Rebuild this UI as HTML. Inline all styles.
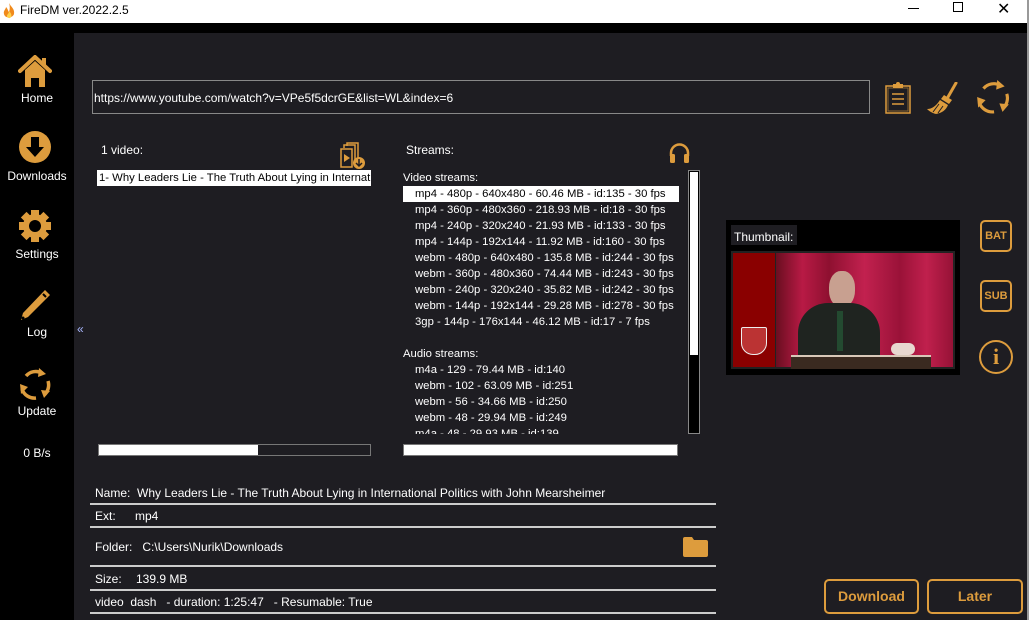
<!DOCTYPE html>
<html><head><meta charset="utf-8"><style>
*{margin:0;padding:0;box-sizing:border-box}
body{width:1029px;height:620px;overflow:hidden;background:#000;font-family:"Liberation Sans",sans-serif;font-size:12px;color:#fff;position:relative}
.a{position:absolute;white-space:nowrap}
.t{font-size:12px;line-height:16px}
.s .t{font-size:11.3px}
.side{color:#fff;font-size:12px;text-align:center;width:74px;left:0}
.ln{position:absolute;left:90px;width:626px;height:2px;background:#ccc}
.btn{position:absolute;border:2px solid #dd9c3d;border-radius:5px;color:#dd9c3d;font-weight:bold;text-align:center}
</style></head><body>
<div class="a" style="left:0;top:0;width:1029px;height:23px;background:#fff"></div>
<svg class="a" style="left:2px;top:2px" width="14" height="18" viewBox="0 0 14 18"><path d="M7 1C9 5 13 7 12 12C11 16 3 17 2 12C1 9 4 7 4 5C6 7 6 9 7 10C8 7 8 4 7 1Z" fill="#f08a1c"/><path d="M7 9C9 11 10 13 9 15C8 17 5 16 5 14C5 12 7 12 7 9Z" fill="#ffd24a"/></svg>
<div class="a" style="left:20px;top:3px;color:#000;font-size:12px">FireDM ver.2022.2.5</div>
<div class="a" style="left:908px;top:8px;width:11px;height:1px;background:#000"></div>
<div class="a" style="left:953px;top:2px;width:10px;height:10px;border:1px solid #000"></div>
<div class="a" style="left:997px;top:-1px;color:#000;font-size:16px">✕</div>
<div class="a" style="left:1027px;top:0;width:2px;height:620px;background:#999"></div>
<div class="a" style="left:74px;top:33px;width:953px;height:587px;background:#1e1d22"></div>

<!-- sidebar -->
<svg class="a" style="left:18px;top:55px" width="34" height="33" viewBox="0 0 34 33"><path d="M2 16L17 2L32 16" fill="none" stroke="#dd9c3d" stroke-width="4" stroke-linecap="round"/><path d="M7 15L17 6L27 15V32H21V23H13V32H7Z" fill="#dd9c3d"/><rect x="24" y="3" width="4" height="8" fill="#dd9c3d"/></svg>
<div class="a side" style="top:91px">Home</div>
<svg class="a" style="left:18px;top:130px" width="34" height="34" viewBox="0 0 34 34"><circle cx="17" cy="17" r="16" fill="#dd9c3d"/><path d="M13 7H21V17H26L17 27L8 17H13Z" fill="#000"/></svg>
<div class="a side" style="top:169px">Downloads</div>
<svg class="a" style="left:18px;top:209px" width="34" height="34" viewBox="0 0 34 34"><g fill="#dd9c3d"><circle cx="17" cy="17" r="12"/><g id="tt"><rect x="13" y="1" width="8" height="8"/><rect x="13" y="25" width="8" height="8"/></g><use href="#tt" transform="rotate(45 17 17)"/><use href="#tt" transform="rotate(90 17 17)"/><use href="#tt" transform="rotate(135 17 17)"/></g><circle cx="17" cy="17" r="6" fill="#000"/></svg>
<div class="a side" style="top:247px">Settings</div>
<svg class="a" style="left:18px;top:288px" width="34" height="34" viewBox="0 0 34 34"><path d="M27 2L32 7L10 29L3 32L5 25Z" fill="#dd9c3d"/><path d="M25 6L28 9" stroke="#000" stroke-width="2"/><circle cx="5" cy="30" r="1.5" fill="#000"/></svg>
<div class="a side" style="top:325px">Log</div>
<svg class="a" style="left:18px;top:367px" width="34" height="34" viewBox="0 0 34 34"><g fill="none" stroke="#dd9c3d" stroke-width="3.5"><path d="M8 9A13 13 0 0 1 24 6"/><path d="M30 14A13 13 0 0 1 26 28"/><path d="M18 31A13 13 0 0 1 4 22"/></g><g fill="#dd9c3d"><path d="M21 1L28 7L20 10Z"/><path d="M32 24L26 31L23 23Z"/><path d="M2 17L10 20L3 27Z"/></g></svg>
<div class="a side" style="top:404px">Update</div>
<div class="a side" style="top:446px">0 B/s</div>
<div class="a" style="left:77px;top:322px;color:#aab8ff;font-size:12px">«</div>

<!-- url -->
<div class="a" style="left:92px;top:80px;width:778px;height:34px;border:1px solid #888"></div>
<div class="a t" style="left:94px;top:90px">https://www.youtube.com/watch?v=VPe5f5dcrGE&amp;list=WL&amp;index=6</div>
<svg class="a" style="left:884px;top:82px" width="28" height="33" viewBox="0 0 28 33"><rect x="2" y="4" width="24" height="27" fill="none" stroke="#dd9c3d" stroke-width="1.5"/><rect x="4" y="6" width="20" height="23" fill="none" stroke="#8a6530" stroke-width="1"/><path d="M9 4V2H12A2 2 0 0 1 16 2H19V6H9Z" fill="#dd9c3d"/><path d="M8 12H20M8 17H20M8 22H20" stroke="#dd9c3d" stroke-width="1.5"/></svg>
<svg class="a" style="left:926px;top:82px" width="34" height="32" viewBox="0 0 34 32"><path d="M30 1L22 15" stroke="#dd9c3d" stroke-width="3" stroke-linecap="round"/><path d="M18 13L26 18L23 22L15 17Z" fill="#dd9c3d"/><path d="M14 18L22 23C20 28 16 31 10 32C6 31 3 29 1 27C6 27 10 24 14 18Z" fill="#dd9c3d"/><path d="M7 30L13 22M12 31L17 24" stroke="#1e1d22" stroke-width="1"/></svg>
<svg class="a" style="left:975px;top:79px" width="36" height="36" viewBox="0 0 34 34"><g fill="none" stroke="#dd9c3d" stroke-width="3"><path d="M8 9A13 13 0 0 1 24 6"/><path d="M30 14A13 13 0 0 1 26 28"/><path d="M18 31A13 13 0 0 1 4 22"/></g><g fill="#dd9c3d"><path d="M21 1L28 7L20 10Z"/><path d="M32 24L26 31L23 23Z"/><path d="M2 17L10 20L3 27Z"/></g></svg>

<!-- left list -->
<div class="a t" style="left:101px;top:142px">1 video:</div>
<svg class="a" style="left:338px;top:142px" width="28" height="28" viewBox="0 0 28 28"><g fill="none" stroke="#dd9c3d" stroke-width="1.5"><path d="M9 4V1H20V20"/><path d="M6 6V3H17V23"/><rect x="3" y="7" width="11" height="18"/></g><path d="M6 12L12 16L6 20Z" fill="#dd9c3d"/><circle cx="21" cy="21" r="6" fill="#dd9c3d"/><path d="M21 17V23M18 21L21 24L24 21" stroke="#1e1d22" stroke-width="1.5" fill="none"/></svg>
<div class="a s" style="left:97px;top:170px;width:274px;height:16px;background:#fff;overflow:hidden"><div class="t" style="color:#000;padding-left:2px">1- Why Leaders Lie - The Truth About Lying in International Politics</div></div>
<div class="a" style="left:98px;top:444px;width:273px;height:12px;border:1px solid #777;background:#1e1d22"><div style="width:159px;height:10px;background:#fff"></div></div>

<!-- streams -->
<div class="a t" style="left:406px;top:142px">Streams:</div>
<svg class="a" style="left:668px;top:142px" width="23" height="22" viewBox="0 0 23 22"><path d="M3 14V11A8.5 8.5 0 0 1 20 11V14" fill="none" stroke="#dd9c3d" stroke-width="2.5"/><rect x="2" y="12" width="5" height="9" rx="1.5" fill="#dd9c3d"/><rect x="16" y="12" width="5" height="9" rx="1.5" fill="#dd9c3d"/></svg>
<div class="a s" style="left:403px;top:170px;width:276px;height:264px;overflow:hidden">
<div class="t">Video streams:</div>
<div class="t" style="background:#fff;color:#000;padding-left:12px">mp4 - 480p - 640x480 - 60.46 MB - id:135 - 30 fps</div>
<div class="t" style="padding-left:12px">mp4 - 360p - 480x360 - 218.93 MB - id:18 - 30 fps</div>
<div class="t" style="padding-left:12px">mp4 - 240p - 320x240 - 21.93 MB - id:133 - 30 fps</div>
<div class="t" style="padding-left:12px">mp4 - 144p - 192x144 - 11.92 MB - id:160 - 30 fps</div>
<div class="t" style="padding-left:12px">webm - 480p - 640x480 - 135.8 MB - id:244 - 30 fps</div>
<div class="t" style="padding-left:12px">webm - 360p - 480x360 - 74.44 MB - id:243 - 30 fps</div>
<div class="t" style="padding-left:12px">webm - 240p - 320x240 - 35.82 MB - id:242 - 30 fps</div>
<div class="t" style="padding-left:12px">webm - 144p - 192x144 - 29.28 MB - id:278 - 30 fps</div>
<div class="t" style="padding-left:12px">3gp - 144p - 176x144 - 46.12 MB - id:17 - 7 fps</div>
<div class="t">&nbsp;</div>
<div class="t">Audio streams:</div>
<div class="t" style="padding-left:12px">m4a - 129 - 79.44 MB - id:140</div>
<div class="t" style="padding-left:12px">webm - 102 - 63.09 MB - id:251</div>
<div class="t" style="padding-left:12px">webm - 56 - 34.66 MB - id:250</div>
<div class="t" style="padding-left:12px">webm - 48 - 29.94 MB - id:249</div>
<div class="t" style="padding-left:12px">m4a - 48 - 29.93 MB - id:139</div>
</div>
<div class="a" style="left:688px;top:170px;width:12px;height:264px;border:1px solid #888;background:#000"><div style="margin:1px;width:8px;height:183px;background:#fff"></div></div>
<div class="a" style="left:403px;top:444px;width:275px;height:12px;border:1px solid #777;background:#fff"></div>

<!-- info -->
<div class="a t" style="left:95px;top:485px">Name:&nbsp; Why Leaders Lie - The Truth About Lying in International Politics with John Mearsheimer</div>
<div class="ln" style="top:503px"></div>
<div class="a t" style="left:95px;top:508px">Ext:</div><div class="a t" style="left:135px;top:508px">mp4</div>
<div class="ln" style="top:526px"></div>
<div class="a t" style="left:95px;top:539px">Folder:&nbsp;&nbsp; C:\Users\Nurik\Downloads</div>
<svg class="a" style="left:683px;top:537px" width="25" height="20" viewBox="0 0 25 20"><path d="M0 2Q0 0 2 0H9L11 3H23Q25 3 25 5V18Q25 20 23 20H2Q0 20 0 18Z" fill="#dd9c3d"/></svg>
<div class="ln" style="top:565px"></div>
<div class="a t" style="left:95px;top:571px">Size:</div><div class="a t" style="left:136px;top:571px">139.9 MB</div>
<div class="ln" style="top:589px"></div>
<div class="a t" style="left:95px;top:594px">video&nbsp; dash&nbsp;&nbsp; - duration: 1:25:47&nbsp;&nbsp; - Resumable: True</div>
<div class="ln" style="top:612px"></div>

<!-- thumbnail -->
<div class="a" style="left:726px;top:220px;width:234px;height:155px;background:#000"></div>
<div class="a t" style="left:731px;top:225px;width:66px;height:20px;background:#1e1d22;padding:4px 0 0 3px">Thumbnail:</div>
<div class="a" style="left:731px;top:251px;width:224px;height:118px;background:#222;overflow:hidden">
<div class="a" style="left:2px;top:2px;width:42px;height:114px;background:#8a0000"></div>
<div class="a" style="left:10px;top:76px;width:26px;height:28px;border:1px solid #eee;border-radius:2px 2px 12px 12px;background:#b33"></div>
<div class="a" style="left:45px;top:2px;width:177px;height:114px;background:linear-gradient(90deg,#6a0e20,#b81a45 15%,#8e1030 30%,#c2214f 50%,#9a1238 70%,#c0204d 85%,#961236)"></div>
<div class="a" style="left:98px;top:20px;width:26px;height:36px;border-radius:45%;background:#c8a090"></div>
<div class="a" style="left:67px;top:52px;width:82px;height:66px;border-radius:30px 30px 0 0;background:#1f2420"></div>
<div class="a" style="left:106px;top:60px;width:6px;height:40px;background:#234a30"></div>
<div class="a" style="left:160px;top:92px;width:24px;height:12px;border-radius:6px;background:#e8d8d0"></div>
<div class="a" style="left:60px;top:104px;width:140px;height:14px;background:#3a2a20;border-top:2px solid #d8c8b8"></div>
</div>

<div class="btn" style="left:980px;top:220px;width:32px;height:32px;font-size:11px;line-height:28px">BAT</div>
<div class="btn" style="left:980px;top:280px;width:32px;height:32px;font-size:11px;line-height:28px">SUB</div>
<div class="a" style="left:979px;top:340px;width:34px;height:34px;border:2px solid #dd9c3d;border-radius:50%;color:#dd9c3d;text-align:center;font:bold 22px/30px 'Liberation Serif',serif">i</div>

<div class="btn" style="left:824px;top:579px;width:95px;height:35px;font-size:14px;line-height:31px">Download</div>
<div class="btn" style="left:927px;top:579px;width:96px;height:35px;font-size:14px;line-height:31px">Later</div>
</body></html>
